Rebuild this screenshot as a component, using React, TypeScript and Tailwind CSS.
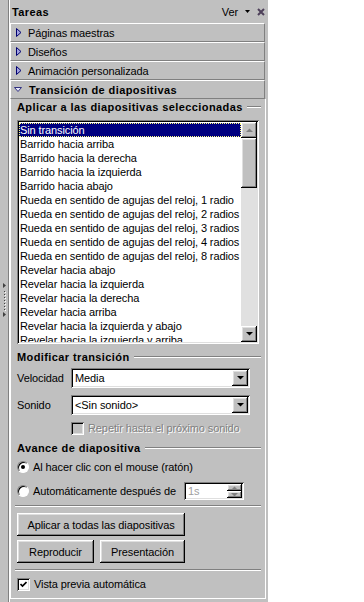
import React from "react";

const raised =
  "shadow-[inset_-1px_-1px_0_#000,inset_1px_1px_0_#fff,inset_-2px_-2px_0_#808080,inset_2px_2px_0_#dfdfdf]";
const sunken =
  "shadow-[inset_1px_1px_0_#808080,inset_-1px_-1px_0_#fff,inset_2px_2px_0_#000,inset_-2px_-2px_0_#dfdfdf]";
const bold = "font-bold tracking-[0.4px]";
const dim = "text-[#808080] [text-shadow:1px_1px_0_#fff]";

const transitions = [
  "Sin transición",
  "Barrido hacia arriba",
  "Barrido hacia la derecha",
  "Barrido hacia la izquierda",
  "Barrido hacia abajo",
  "Rueda en sentido de agujas del reloj, 1 radio",
  "Rueda en sentido de agujas del reloj, 2 radios",
  "Rueda en sentido de agujas del reloj, 3 radios",
  "Rueda en sentido de agujas del reloj, 4 radios",
  "Rueda en sentido de agujas del reloj, 8 radios",
  "Revelar hacia abajo",
  "Revelar hacia la izquierda",
  "Revelar hacia la derecha",
  "Revelar hacia arriba",
  "Revelar hacia la izquierda y abajo",
  "Revelar hacia la izquierda y arriba",
];

function Caret({ open }: { open?: boolean }) {
  if (open)
    return (
      <svg width="8" height="5" viewBox="0 0 8 5">
        <polygon points="0.5,0.5 7.5,0.5 4,4.5" fill="#e8e8f8" stroke="#303080" />
      </svg>
    );
  return (
    <svg width="6" height="9" viewBox="0 0 6 9">
      <polygon points="0.5,0.5 5,4.5 0.5,8.5" fill="#a0a0e0" stroke="#000070" />
    </svg>
  );
}

function Arrow({ up, grey }: { up?: boolean; grey?: boolean }) {
  return (
    <svg width="7" height="4" viewBox="0 0 7 4">
      <polygon points={up ? "0,4 7,4 3.5,0.5" : "0,0 7,0 3.5,3.5"} fill={grey ? "#808080" : "#000"} />
    </svg>
  );
}

function ArrowBtn({ up, grey, className = "" }: { up?: boolean; grey?: boolean; className?: string }) {
  return (
    <div className={`${raised} bg-[#c0c0c0] flex items-center justify-center ${className}`}>
      <Arrow up={up} grey={grey} />
    </div>
  );
}

function GroupLabel({ children }: { children: React.ReactNode }) {
  return (
    <div className="flex items-center h-[14px]">
      <span className={bold}>{children}</span>
      <div className="ml-[4px] flex-1 h-[2px] border-t border-[#808080] border-b border-b-white" />
    </div>
  );
}

function Radio({ checked }: { checked?: boolean }) {
  return (
    <div className="w-[12px] h-[12px] rounded-full bg-white border border-t-[#808080] border-l-[#808080] border-r-white border-b-white shadow-[inset_1px_1px_0_#000] flex items-center justify-center">
      {checked && <div className="w-[4px] h-[4px] rounded-full bg-black" />}
    </div>
  );
}

function Check({ checked, off }: { checked?: boolean; off?: boolean }) {
  return (
    <div className={`w-[13px] h-[13px] ${sunken} ${off ? "bg-[#c0c0c0]" : "bg-white"} flex items-center justify-center`}>
      {checked && (
        <svg width="7" height="7" viewBox="0 0 7 7">
          <path d="M0.5 3 L2.5 5 L6.5 1" stroke="#000" strokeWidth="1.7" fill="none" />
        </svg>
      )}
    </div>
  );
}

function Combo({ value }: { value: string }) {
  return (
    <div className={`w-[179px] h-[20px] bg-white ${sunken} p-[2px] flex items-center`}>
      <span className="flex-1 pl-[2px]">{value}</span>
      <ArrowBtn className="w-[16px] h-[16px]" />
    </div>
  );
}

function Button({ label, w }: { label: string; w: string }) {
  return (
    <div className={`${w} h-[23px] bg-[#c0c0c0] ${raised} flex items-center justify-center`}>{label}</div>
  );
}

export default function App() {
  return (
    <div className="w-[364px] h-[602px] bg-white overflow-hidden">
      <div className="w-[268px] h-[602px] bg-[#c0c0c0] flex font-['Liberation_Sans',Arial,sans-serif] text-[11px] tracking-[-0.1px] text-black leading-[14px]">
        {/* splitter */}
        <div className="w-[9px] border-r border-[#808080] flex flex-col items-center pt-[283px]">
          <svg width="5" height="34" viewBox="0 0 5 34">
            <polygon points="1,0 4,2.5 1,5" fill="#404040" />
            {[8, 11, 14, 17, 20, 23, 26].map((y) => (
              <g key={y}>
                <rect x="2" y={y} width="1" height="1" fill="#404040" />
                <rect x="3" y={y + 1} width="1" height="1" fill="#fff" />
              </g>
            ))}
            <polygon points="1,29 4,31.5 1,34" fill="#404040" />
          </svg>
        </div>

        {/* pane */}
        <div className="w-[258px] flex flex-col border-l border-white">
          <div className="h-[23px] flex items-center pl-[2px] pr-[2px]">
            <span className={bold}>Tareas</span>
            <div className="ml-auto flex items-center">
              <span>Ver</span>
              <svg className="ml-[7px]" width="5" height="3" viewBox="0 0 5 3">
                <polygon points="0,0 5,0 2.5,3" fill="#000" />
              </svg>
              <svg className="ml-[7px]" width="8" height="8" viewBox="0 0 8 8">
                <path d="M1 1 L7 7 M7 1 L1 7" stroke="#4e405a" strokeWidth="2" />
              </svg>
            </div>
          </div>

          {["Páginas maestras", "Diseños", "Animación personalizada"].map((t) => (
            <div
              key={t}
              className="w-[255px] h-[19px] flex items-center border-t border-l border-white border-b border-r border-b-[#808080] border-r-[#808080]"
            >
              <div className="w-[17px] pl-[5px] flex items-center">
                <Caret />
              </div>
              <span>{t}</span>
            </div>
          ))}

          <div className="w-[255px] h-[19px] flex items-center border-t border-l border-white border-b border-r border-b-[#808080] border-r-[#808080]">
            <div className="w-[18px] pl-[3px] flex items-center">
              <Caret open />
            </div>
            <span className={bold}>Transición de diapositivas</span>
          </div>

          {/* transition panel */}
          <div className="w-[256px] h-[500px] border-l border-r border-b border-white pl-[6px] pr-[4px] flex flex-col">
            <div className="mt-[1px]">
              <GroupLabel>Aplicar a las diapositivas seleccionadas</GroupLabel>
            </div>

            <div className={`mt-[6px] w-[242px] h-[224px] bg-white ${sunken} p-[2px] flex`}>
              <div className="flex-1 overflow-hidden pt-[1px]">
                {transitions.map((t, i) => (
                  <div
                    key={t}
                    className={`h-[14px] pl-[1px] whitespace-nowrap ${
                      i === 0
                        ? "bg-[#000080] text-white outline-1 outline-dotted outline-[#ffff80] -outline-offset-1"
                        : ""
                    }`}
                  >
                    {t}
                  </div>
                ))}
              </div>
              <div className="w-[16px] flex flex-col bg-[#e0e0e0]">
                <ArrowBtn up grey className="h-[16px]" />
                <div className={`h-[50px] bg-[#c0c0c0] ${raised}`} />
                <div className="flex-1" />
                <ArrowBtn className="h-[16px]" />
              </div>
            </div>

            <div className="mt-[6px]">
              <GroupLabel>Modificar transición</GroupLabel>
            </div>

            <div className="mt-[4px] flex items-center">
              <span className="w-[54px]">Velocidad</span>
              <Combo value="Media" />
            </div>
            <div className="mt-[7px] flex items-center">
              <span className="w-[54px]">Sonido</span>
              <Combo value="<Sin sonido>" />
            </div>
            <div className="mt-[6px] h-[14px] flex items-center pl-[54px]">
              <Check off />
              <span className={`ml-[4px] ${dim}`}>Repetir hasta el próximo sonido</span>
            </div>

            <div className="mt-[6px]">
              <GroupLabel>Avance de diapositiva</GroupLabel>
            </div>

            <div className="mt-[5px] h-[14px] flex items-center">
              <Radio checked />
              <span className="ml-[4px]">Al hacer clic con el mouse (ratón)</span>
            </div>
            <div className="mt-[8px] h-[18px] flex items-center">
              <Radio />
              <span className="ml-[4px]">Automáticamente después de</span>
              <div className={`ml-auto mr-[17px] w-[60px] h-[18px] bg-white ${sunken} p-[2px] flex`}>
                <span className="flex-1 pl-[2px] text-[#a0a0a0]">1s</span>
                <div className="w-[15px] flex flex-col">
                  <ArrowBtn up grey className="h-[7px]" />
                  <ArrowBtn grey className="h-[7px]" />
                </div>
              </div>
            </div>

            <div className="mt-[5px] -ml-[2px] h-[2px] border-t border-[#808080] border-b border-b-white" />

            <div className="mt-[6px]">
              <Button label="Aplicar a todas las diapositivas" w="w-[168px]" />
            </div>
            <div className="mt-[4px] flex gap-[6px]">
              <Button label="Reproducir" w="w-[77px]" />
              <Button label="Presentación" w="w-[85px]" />
            </div>

            <div className="mt-[6px] -ml-[2px] h-[2px] border-t border-[#808080] border-b border-b-white" />

            <div className="mt-[6px] h-[14px] flex items-center">
              <Check checked />
              <span className="ml-[4px]">Vista previa automática</span>
            </div>
          </div>
        </div>
      </div>
    </div>
  );
}
